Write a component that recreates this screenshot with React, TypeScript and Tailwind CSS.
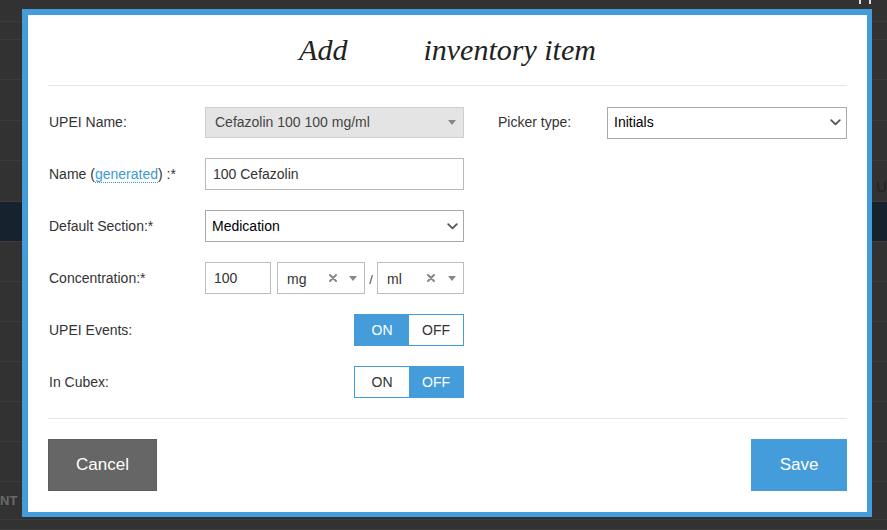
import React from "react";

function Chevron() {
  return (
    <svg width="11" height="7" viewBox="0 0 11 7" className="shrink-0">
      <polyline points="1.2,1.2 5.5,5.3 9.8,1.2" fill="none" stroke="#555" strokeWidth="1.8" strokeLinecap="round" strokeLinejoin="round" />
    </svg>
  );
}

function Tri() {
  return (
    <svg width="8" height="5" viewBox="0 0 8 5" className="shrink-0">
      <polygon points="0,0 8,0 4,5" fill="#888" />
    </svg>
  );
}

function Cross() {
  return (
    <svg width="8" height="8" viewBox="0 0 8 8" className="shrink-0">
      <path d="M1 1 L7 7 M7 1 L1 7" stroke="#888" strokeWidth="2" strokeLinecap="round" />
    </svg>
  );
}

function Row({ label, children, first }: { label: React.ReactNode; children: React.ReactNode; first?: boolean }) {
  return (
    <div className={`flex items-center ${first ? "h-[31px]" : "h-[32px]"}`}>
      <div className="w-[157px] pl-[1px] text-[14px] text-[#333]">{label}</div>
      <div className="w-[259px] h-full flex items-center">{children}</div>
    </div>
  );
}

function Toggle({ on }: { on: boolean }) {
  return (
    <div className="ml-auto flex w-[110px] h-[32px] border border-[#449dda] text-[14px]">
      <div className={`flex-1 flex items-center justify-center ${on ? "bg-[#449dda] text-white" : "bg-white text-[#333]"}`}>ON</div>
      <div className={`flex-1 flex items-center justify-center ${!on ? "bg-[#449dda] text-white" : "bg-white text-[#333]"}`}>OFF</div>
    </div>
  );
}

const bgRows: { h: number; cls?: string; content?: React.ReactNode }[] = [
  { h: 22 },
  { h: 18 },
  { h: 40 },
  { h: 41 },
  { h: 40 },
  { h: 41 },
  { h: 40, cls: "bg-[#16222e]" },
  { h: 40 },
  { h: 40 },
  { h: 40 },
  { h: 40 },
  { h: 40 },
  { h: 40 },
  { h: 38, content: <span className="text-[13px] font-bold text-[#6a6a6a]">NT</span> },
  { h: 10 },
];

export default function App() {
  return (
    <div className="relative w-[887px] h-[530px] overflow-hidden bg-[#323232] font-['Liberation_Sans',Arial,sans-serif]">
      <div className="flex flex-col">
        {bgRows.map((r, i) => (
          <div
            key={i}
            className={`flex items-center border-b border-[#3b3b3b] ${r.cls ?? ""}`}
            style={{ height: r.h }}
          >
            {r.content}
          </div>
        ))}
      </div>
      <div className="absolute top-0 left-[859px] w-[2px] h-[4px] bg-[#ddd]" />
      <div className="absolute top-0 left-[869px] w-[2px] h-[4px] bg-[#ddd]" />
      <div className="absolute top-[176px] left-[876px] text-[15px] text-[#222]">U</div>

      {/* modal */}
      <div className="absolute left-[22px] top-[9px] w-[850px] h-[508px] border-l-[6px] border-t-[6px] border-r-[5px] border-b-[5px] border-[#449dda] bg-white">
        <div className="px-[20px] flex flex-col">
          <div className="h-[70px] flex items-center justify-center pb-[1px] font-['Liberation_Serif',serif] italic text-[30px] text-[#222]">
            <span>Add</span>
            <span className="inline-block w-[76px]" />
            <span>inventory item</span>
          </div>
          <div className="h-px bg-[#e5e5e5]" />

          <div className="flex pt-[21px]">
            <div className="flex flex-col gap-[20px] w-[416px]">
              <Row label="UPEI Name:" first>
                <div className="w-full h-[31px] flex items-center bg-[#e4e4e4] border border-[#cfcfcf] pl-[9px] pr-[7px] text-[14px] text-[#444]">
                  <span className="flex-1">Cefazolin 100 100 mg/ml</span>
                  <Tri />
                </div>
              </Row>
              <Row label={<span>Name (<span className="text-[#3a9ad9] border-b border-dotted border-[#3a9ad9]">generated</span>) :*</span>}>
                <div className="w-full h-[32px] flex items-center border border-[#b9b9b9] px-[7px] text-[14px] text-[#333]">
                  100 Cefazolin
                </div>
              </Row>
              <Row label="Default Section:*">
                <div className="w-full h-[32px] flex items-center border border-[#a9a9a9] pl-[6px] pr-[5px] text-[14px] text-black">
                  <span className="flex-1">Medication</span>
                  <Chevron />
                </div>
              </Row>
              <Row label="Concentration:*">
                <div className="flex items-center w-full h-[32px]">
                  <div className="w-[66px] h-[32px] flex items-center border border-[#bdbdbd] px-[8px] text-[14px] text-[#333]">100</div>
                  <div className="ml-[6px] w-[88px] h-[32px] flex items-center border border-[#bdbdbd] pl-[9px] pr-[7px] text-[14px] text-[#333]">
                    <span className="flex-1 pt-[3px]">mg</span>
                    <Cross />
                    <span className="w-[12px]" />
                    <Tri />
                  </div>
                  <span className="w-[12px] text-center text-[13px] text-[#444] pt-[4px]">/</span>
                  <div className="w-[87px] h-[32px] flex items-center border border-[#bdbdbd] pl-[9px] pr-[7px] text-[14px] text-[#333]">
                    <span className="flex-1 pt-[3px]">ml</span>
                    <Cross />
                    <span className="w-[13px]" />
                    <Tri />
                  </div>
                </div>
              </Row>
              <Row label="UPEI Events:">
                <Toggle on={true} />
              </Row>
              <Row label="In Cubex:">
                <Toggle on={false} />
              </Row>
            </div>

            <div className="ml-[33px] flex-1">
              <div className="flex items-center h-[31px]">
                <div className="w-[110px] pl-[1px] text-[14px] text-[#333]">Picker type:</div>
                <div className="flex-1 h-[32px] flex items-center border border-[#a9a9a9] pl-[6px] pr-[5px] text-[14px] text-black">
                  <span className="flex-1">Initials</span>
                  <Chevron />
                </div>
              </div>
            </div>
          </div>

          <div className="h-px bg-[#e5e5e5] mt-[20px]" />

          <div className="flex justify-between pt-[20px]">
            <button className="w-[109px] h-[52px] bg-[#666] border border-[#5e5e5e] text-white text-[17px] flex items-center justify-center">
              Cancel
            </button>
            <button className="w-[96px] h-[52px] bg-[#449dda] text-white text-[17px] flex items-center justify-center">
              Save
            </button>
          </div>
        </div>
      </div>
    </div>
  );
}
